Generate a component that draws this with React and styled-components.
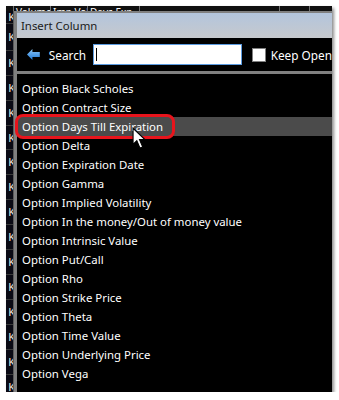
import React from 'react'
import styled, { createGlobalStyle } from 'styled-components'

const Global = createGlobalStyle`
  html, body { margin: 0; padding: 0; background: #ffffff; }
  body { font-family: "Noto Sans", "DejaVu Sans", sans-serif; }
`;

const Shot = styled.div`
  margin: 6px 0 0 6px;
  width: 326px;
  height: 386px;
  background: #000;
  box-shadow: 2px 2px 3px rgba(0, 0, 0, 0.45);
  display: flex;
  flex-direction: column;
  overflow: hidden;
`;

const AppHeader = styled.div`
  height: 5px;
  flex: none;
  display: flex;
  background: #101010;
  overflow: hidden;
`;

const HeadCell = styled.div`
  width: ${({ w }) => w}px;
  height: 5px;
  flex: none;
  border-right: 1px solid #707070;
  color: #fff;
  font-size: 10px;
  line-height: 12px;
  padding-left: 2px;
  white-space: nowrap;
  overflow: hidden;
  box-sizing: border-box;
`;

const Body = styled.div`
  flex: 1;
  display: flex;
  min-height: 0;
`;

const SideStrip = styled.div`
  width: 7px;
  flex: none;
  background: #0a0a14;
  border-right: 1px solid #5a5a5a;
  display: flex;
  flex-direction: column;
  overflow: hidden;
`;

const SideCell = styled.div`
  height: ${({ h }) => h}px;
  flex: none;
  border-bottom: 1px solid #3a3a3a;
  color: #f4eee0;
  font-size: 11px;
  line-height: ${({ h }) => h}px;
  white-space: nowrap;
  overflow: hidden;
  display: flex;
  justify-content: flex-end;
  span { margin-right: -2px; }
`;

const Dialog = styled.div`
  flex: 1;
  display: flex;
  flex-direction: column;
  border-top: 2px solid #808080;
  border-left: 3px solid #808080;
  min-width: 0;
`;

const TitleBar = styled.div`
  height: 25px;
  flex: none;
  background: linear-gradient(#b3c5dd, #c6c9cd);
  color: #1a1a1a;
  font-size: 11.4px;
  display: flex;
  align-items: center;
  padding-left: 4px;
`;

const Toolbar = styled.div`
  height: 33px;
  flex: none;
  background: #000;
  display: flex;
  align-items: center;
  padding-left: 10px;
  color: #fff;
  font-size: 11.8px;
  white-space: nowrap;
`;

const SearchLabel = styled.span`
  margin-left: 9px;
  margin-right: 7px;
`;

const SearchInput = styled.div`
  width: 147px;
  height: 19px;
  background: #fff;
  border: 1px solid #5b9be0;
  display: flex;
  align-items: center;
  padding-left: 2px;
  &::before {
    content: '';
    width: 1px;
    height: 13px;
    background: #000;
  }
`;

const Check = styled.div`
  width: 12px;
  height: 12px;
  background: #fff;
  border: 1px solid #808080;
  margin-left: 10px;
  margin-right: 5px;
`;

const Separator = styled.div`
  height: 3px;
  flex: none;
  background: #808080;
`;

const List = styled.div`
  flex: 1;
  background: #000;
  padding-top: 5px;
`;

const Item = styled.div`
  position: relative;
  height: 19px;
  line-height: 19px;
  font-size: 11.4px;
  color: #fff;
  padding-left: 5px;
  white-space: nowrap;
  background: ${({ active }) => (active ? '#4b4b4b' : 'transparent')};
`;

const Ring = styled.div`
  position: absolute;
  left: -2px;
  top: -3px;
  width: 160px;
  height: 25px;
  border: 3px solid #e8141c;
  border-radius: 8px;
  box-sizing: border-box;
`;

const Pointer = styled.svg`
  position: absolute;
  left: 115px;
  top: 10px;
  display: block;
`;

const BackArrow = () => (
  <svg width="13" height="11" viewBox="0 0 13 11">
    <defs>
      <linearGradient id="ba" x1="0" y1="0" x2="0" y2="1">
        <stop offset="0" stopColor="#8cc8f8" />
        <stop offset="1" stopColor="#1e78d8" />
      </linearGradient>
    </defs>
    <path d="M0 5.5 L5.5 0 L5.5 3 L13 3 L13 8 L5.5 8 L5.5 11 Z" fill="url(#ba)" />
  </svg>
);

const items = [
  'Option Black Scholes',
  'Option Contract Size',
  'Option Days Till Expiration',
  'Option Delta',
  'Option Expiration Date',
  'Option Gamma',
  'Option Implied Volatility',
  'Option In the money/Out of money value',
  'Option Intrinsic Value',
  'Option Put/Call',
  'Option Rho',
  'Option Strike Price',
  'Option Theta',
  'Option Time Value',
  'Option Underlying Price',
  'Option Vega',
];

const sideCells = [12, 26, 24, 24, 24, 23, 24, 24, 24, 24, 24, 24, 24, 24, 24, 24];

const App = () => (
  <>
    <Global />
    <Shot>
      <AppHeader>
        <HeadCell w={8} />
        <HeadCell w={37}>Volume</HeadCell>
        <HeadCell w={37}>Imp Vol</HeadCell>
        <HeadCell w={52}>Days Exp</HeadCell>
        <HeadCell w={140} />
        <HeadCell w={30} />
      </AppHeader>
      <Body>
        <SideStrip>
          {sideCells.map((h, i) => (
            <SideCell key={i} h={h}><span>K</span></SideCell>
          ))}
        </SideStrip>
        <Dialog>
          <TitleBar>Insert Column</TitleBar>
          <Toolbar>
            <BackArrow />
            <SearchLabel>Search</SearchLabel>
            <SearchInput />
            <Check />
            Keep Open
          </Toolbar>
          <Separator />
          <List>
            {items.map((t, i) => (
              <Item key={t} active={i === 2}>
                {t}
                {i === 2 && (
                  <>
                    <Ring />
                    <Pointer width="15" height="24" viewBox="0 0 14 22">
                      <path
                        d="M1 1 L1 16 L4.5 12.5 L7.5 19.5 L10 18.5 L7 11.5 L12 11.5 Z"
                        fill="#fff"
                        stroke="#000"
                        strokeWidth="1"
                      />
                    </Pointer>
                  </>
                )}
              </Item>
            ))}
          </List>
        </Dialog>
      </Body>
    </Shot>
  </>
);

export default App
